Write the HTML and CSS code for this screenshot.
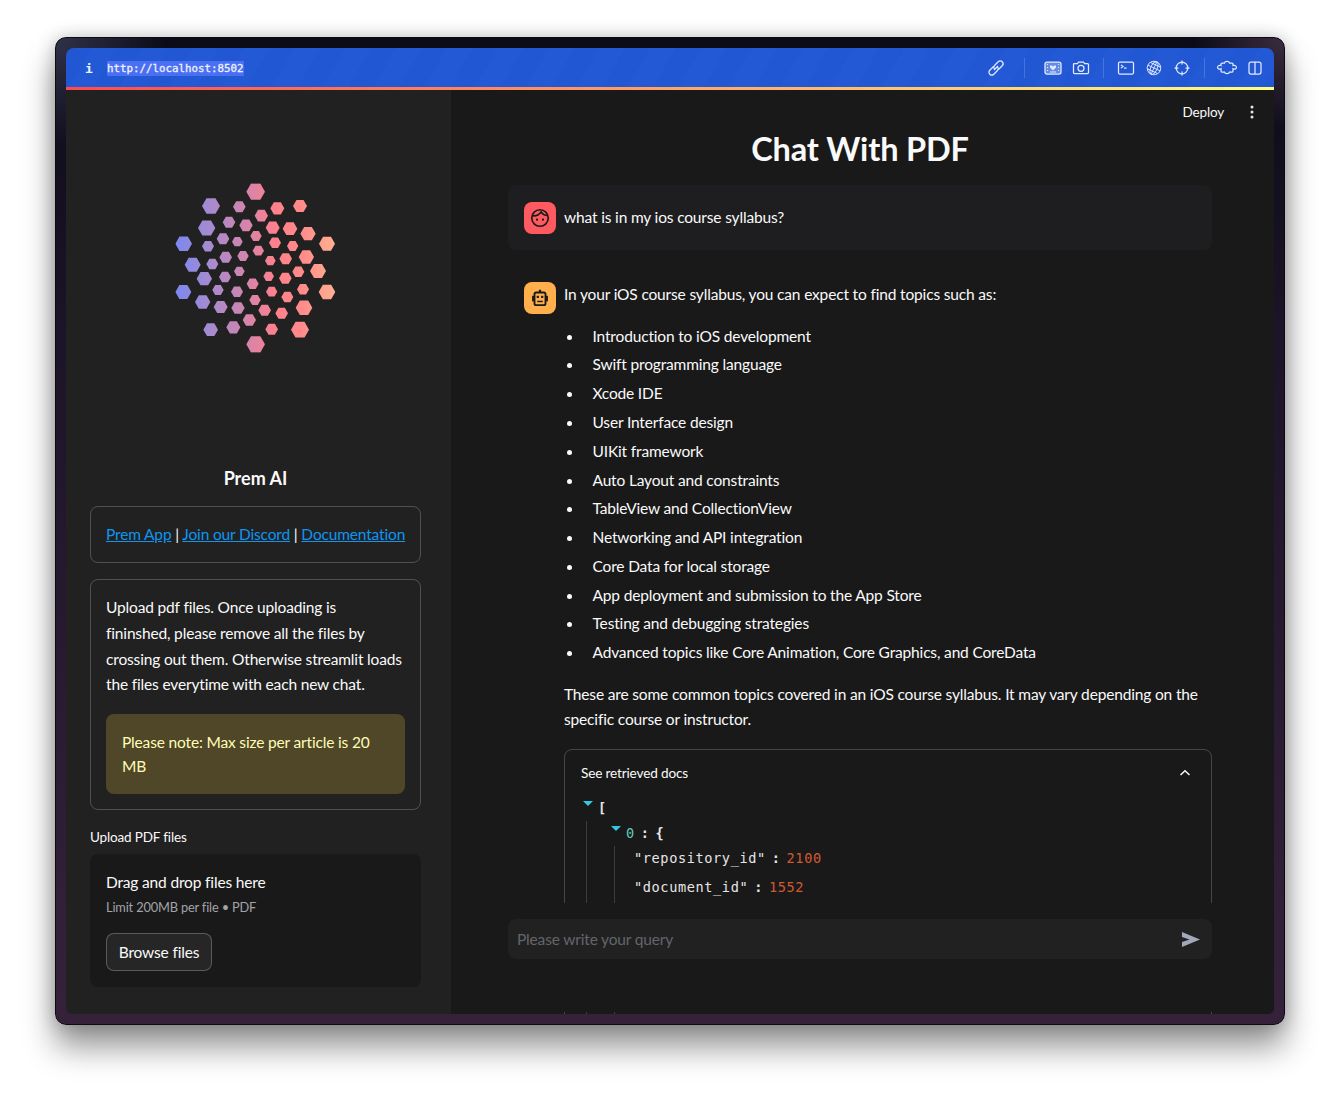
FILE: index.html
```html
<!DOCTYPE html>
<html lang="en">
<head>
    <meta charset="UTF-8">
    <meta name="viewport" content="width=device-width, initial-scale=1.0">
    <title>Chat With PDF</title>
    <link rel="stylesheet" href="styles.css">
</head>
<body>

    <div class="window">
        <div class="toolbar">
            <span class="info">i</span>
            <span class="url">http://localhost:8502</span>
            <div class="tools">
                <svg class="tool" viewBox="0 0 18 18"><path d="M7 11l4-4M6.500 7.500l-3.700 3.700a2.800 2.800 0 0 0 4 4l3.700-3.700a2.800 2.800 0 0 0 .3-3.300M11.500 10.500l3.700-3.700a2.800 2.800 0 0 0-4-4L7.500 6.500a2.800 2.800 0 0 0-.3 3.300"/></svg>
                <span class="sep wide"></span>
                <svg class="tool" viewBox="0 0 18 18"><rect class="tint" x="1" y="3" width="16" height="12" rx="2"/><path class="solid" d="M6 6.500h2l1 1.200 1-1.200h2v2l-3 3-3-3zM3 5h1v1H3zM3 8h1v1H3zM3 11h1v1H3zM14 5h1v1h-1zM14 8h1v1h-1zM14 11h1v1h-1zM6 12.500h6v1H6z"/></svg>
                <svg class="tool" viewBox="0 0 18 18"><path d="M1.500 5.500a1 1 0 0 1 1-1h3l1-1.500h5l1 1.500h3a1 1 0 0 1 1 1v8a1 1 0 0 1-1 1h-13a1 1 0 0 1-1-1z"/><circle cx="9" cy="9.300" r="3"/></svg>
                <span class="sep"></span>
                <svg class="tool" viewBox="0 0 18 18"><rect x="1.500" y="3" width="15" height="12" rx="1.200"/><path d="M4 6l2 1.500L4 9M7 9h2.500"/></svg>
                <svg class="tool" viewBox="0 0 18 18"><g class="thin" transform="rotate(25 9 9)"><circle cx="9" cy="9" r="6.800"/><ellipse cx="9" cy="9" rx="3.200" ry="6.800"/><path d="M9 2.200v13.600M2.200 9h13.600M3.200 5.500h11.600M3.200 12.500h11.600"/></g></svg>
                <svg class="tool" viewBox="0 0 18 18"><circle cx="9" cy="9" r="5.800"/><path d="M9 1.500v4M9 12.500v4M1.500 9h4M12.500 9h4"/></svg>
                <span class="sep"></span>
                <svg class="tool" viewBox="0 0 18 18"><path d="M4 4h2.500c.3-2.200 4.700-2.200 5 0H14c.6 0 1 .4 1 1v1.500c2.300-.8 3.800 1 3.400 2.300-.5 1.400-2 1.700-3.400.9V12c0 .6-.4 1-1 1h-2.500c-.3 2.200-4.700 2.200-5 0H4c-.6 0-1-.4-1-1V9.700C1.600 10.500.1 10.200-.4 8.800-.8 7.500.7 5.700 3 6.500V5c0-.6.400-1 1-1z"/></svg>
                <svg class="tool" viewBox="0 0 18 18"><rect x="3" y="3" width="12" height="12" rx="2"/><path d="M9 3v12"/></svg>
            </div>
        </div>
        <div class="stripe"></div>

        <div class="app">
            <aside class="sidebar">
                <svg class="logo" viewBox="0 0 570 585">
                    <defs>
                        <polygon id="h" points="-1,0 -.5,-.87 .5,-.87 1,0 .5,.87 -.5,.87"/>
                        <linearGradient id="logoGrad" gradientUnits="userSpaceOnUse" x1="40" y1="0" x2="530" y2="0">
                            <stop offset="0" stop-color="#7788f2"/>
                            <stop offset=".2" stop-color="#a18bd4"/>
                            <stop offset=".4" stop-color="#c886b4"/>
                            <stop offset=".52" stop-color="#e5839f"/>
                            <stop offset=".62" stop-color="#ff808c"/>
                            <stop offset=".78" stop-color="#ff8a8a"/>
                            <stop offset="1" stop-color="#ffb291"/>
                        </linearGradient>
                        <clipPath id="hexes">
                            <use href="#h" transform="translate(287 65) scale(28)"/>
                            <use href="#h" transform="translate(153 108) scale(27)"/>
                            <use href="#h" transform="translate(238 110) scale(19)"/>
                            <use href="#h" transform="translate(352 115) scale(21)"/>
                            <use href="#h" transform="translate(420 108) scale(21)"/>
                            <use href="#h" transform="translate(304 137) scale(20)"/>
                            <use href="#h" transform="translate(207 157) scale(19)"/>
                            <use href="#h" transform="translate(258 166) scale(20)"/>
                            <use href="#h" transform="translate(140 174) scale(26)"/>
                            <use href="#h" transform="translate(338 173) scale(21)"/>
                            <use href="#h" transform="translate(390 176) scale(22)"/>
                            <use href="#h" transform="translate(444 191) scale(23)"/>
                            <use href="#h" transform="translate(288 198) scale(17)"/>
                            <use href="#h" transform="translate(189 206) scale(19)"/>
                            <use href="#h" transform="translate(232 215) scale(16)"/>
                            <use href="#h" transform="translate(501 221) scale(24)"/>
                            <use href="#h" transform="translate(71 221) scale(25)"/>
                            <use href="#h" transform="translate(345 218) scale(18)"/>
                            <use href="#h" transform="translate(144 229) scale(18)"/>
                            <use href="#h" transform="translate(398 228) scale(17)"/>
                            <use href="#h" transform="translate(295 242) scale(17)"/>
                            <use href="#h" transform="translate(249 258) scale(17)"/>
                            <use href="#h" transform="translate(197 262) scale(19)"/>
                            <use href="#h" transform="translate(439 261) scale(23)"/>
                            <use href="#h" transform="translate(331 272) scale(16)"/>
                            <use href="#h" transform="translate(377 266) scale(19)"/>
                            <use href="#h" transform="translate(157 282) scale(18)"/>
                            <use href="#h" transform="translate(98 284) scale(24)"/>
                            <use href="#h" transform="translate(474 303) scale(24)"/>
                            <use href="#h" transform="translate(415 305) scale(18)"/>
                            <use href="#h" transform="translate(238 304) scale(16)"/>
                            <use href="#h" transform="translate(326 319) scale(16)"/>
                            <use href="#h" transform="translate(133 326) scale(23)"/>
                            <use href="#h" transform="translate(195 321) scale(18)"/>
                            <use href="#h" transform="translate(376 325) scale(19)"/>
                            <use href="#h" transform="translate(278 341) scale(18)"/>
                            <use href="#h" transform="translate(70 366) scale(24)"/>
                            <use href="#h" transform="translate(174 360) scale(17)"/>
                            <use href="#h" transform="translate(231 365) scale(18)"/>
                            <use href="#h" transform="translate(335 365) scale(17)"/>
                            <use href="#h" transform="translate(429 358) scale(18)"/>
                            <use href="#h" transform="translate(501 366) scale(25)"/>
                            <use href="#h" transform="translate(382 381) scale(18)"/>
                            <use href="#h" transform="translate(128 396) scale(23)"/>
                            <use href="#h" transform="translate(285 390) scale(17)"/>
                            <use href="#h" transform="translate(182 411) scale(21)"/>
                            <use href="#h" transform="translate(234 414) scale(20)"/>
                            <use href="#h" transform="translate(432 413) scale(25)"/>
                            <use href="#h" transform="translate(314 421) scale(19)"/>
                            <use href="#h" transform="translate(365 430) scale(19)"/>
                            <use href="#h" transform="translate(268 450) scale(20)"/>
                            <use href="#h" transform="translate(152 479) scale(22)"/>
                            <use href="#h" transform="translate(220 472) scale(21)"/>
                            <use href="#h" transform="translate(335 478) scale(19)"/>
                            <use href="#h" transform="translate(420 479) scale(27)"/>
                            <use href="#h" transform="translate(287 523) scale(28)"/>
                        </clipPath>
                    </defs>
                    <rect width="570" height="585" fill="url(#logoGrad)" clip-path="url(#hexes)"/>
                </svg>

                <h2 class="brand">Prem AI</h2>

                <div class="card links">
                    <a href="#">Prem App</a> | <a href="#">Join our Discord</a> | <a href="#">Documentation</a>
                </div>

                <div class="card">
                    <p class="intro">Upload pdf files. Once uploading is fininshed, please remove all the files by crossing out them. Otherwise streamlit loads the files everytime with each new chat.</p>
                    <div class="note">Please note: Max size per article is 20 MB</div>
                </div>

                <label class="upload-label">Upload PDF files</label>
                <div class="dropzone">
                    <div class="drop-title">Drag and drop files here</div>
                    <div class="drop-limit">Limit 200MB per file • PDF</div>
                    <button class="browse">Browse files</button>
                </div>
            </aside>

            <main class="main">
                <div class="top-actions">
                    <span class="deploy">Deploy</span>
                    <svg class="kebab" viewBox="0 0 4 14"><circle cx="2" cy="2" r="1.500"/><circle cx="2" cy="7" r="1.500"/><circle cx="2" cy="12" r="1.500"/></svg>
                </div>

                <div class="content">
                    <h1>Chat With PDF</h1>

                    <div class="message user">
                        <div class="avatar red">
                            <svg viewBox="0 0 20 20"><circle cx="10" cy="10" r="7.500"/><path d="M3.500 8C6 8.300 9 7.200 11 4.500c1 2 3 3 5.300 3.200"/><circle class="dot" cx="7.300" cy="11.500" r="1"/><circle class="dot" cx="12.700" cy="11.500" r="1"/></svg>
                        </div>
                        <div class="message-body">what is in my ios course syllabus?</div>
                    </div>

                    <div class="message bot">
                        <div class="avatar orange">
                            <svg viewBox="0 0 20 20"><rect class="fill" x="9" y="2.500" width="2" height="3"/><rect class="fill" x="2.800" y="8" width="2.500" height="5"/><rect class="fill" x="14.700" y="8" width="2.500" height="5"/><rect class="face" x="5" y="5" width="10" height="11.500" rx="1.500"/><rect class="fill" x="7" y="8" width="2" height="2"/><rect class="fill" x="11" y="8" width="2" height="2"/><rect class="fill" x="7.500" y="12.500" width="5" height="1.300"/></svg>
                        </div>
                        <div class="message-body">
                            <p>In your iOS course syllabus, you can expect to find topics such as:</p>
                            <ul>
                                <li>Introduction to iOS development</li>
                                <li>Swift programming language</li>
                                <li>Xcode IDE</li>
                                <li>User Interface design</li>
                                <li>UIKit framework</li>
                                <li>Auto Layout and constraints</li>
                                <li>TableView and CollectionView</li>
                                <li>Networking and API integration</li>
                                <li>Core Data for local storage</li>
                                <li>App deployment and submission to the App Store</li>
                                <li>Testing and debugging strategies</li>
                                <li>Advanced topics like Core Animation, Core Graphics, and CoreData</li>
                            </ul>
                            <p class="summary">These are some common topics covered in an iOS course syllabus. It may vary depending on the specific course or instructor.</p>

                            <div class="expander">
                                <div class="expander-head">
                                    <span>See retrieved docs</span>
                                    <svg class="chevron" viewBox="0 0 12 8"><path d="M1.500 6L6 1.800 10.500 6"/></svg>
                                </div>
                                <div class="json">
                                    <div class="json-row"><i class="caret"></i><span class="bracket">[</span></div>
                                    <div class="json-nest">
                                        <div class="json-row"><i class="caret"></i><span class="idx">0</span><span class="colon">:</span><span class="bracket">{</span></div>
                                        <div class="json-nest inner">
                                            <div class="json-row"><span class="key">"repository_id"</span><span class="colon">:</span><span class="num">2100</span></div>
                                            <div class="json-row"><span class="key">"document_id"</span><span class="colon">:</span><span class="num">1552</span></div>
                                        </div>
                                    </div>
                                </div>
                            </div>
                        </div>
                    </div>
                </div>

                <div class="bottom">
                    <div class="chat-input">
                        <span class="placeholder">Please write your query</span>
                        <svg class="send" viewBox="0 0 18 15"><path d="M0 0l18 7.500L0 15v-5l7.500-2.500L0 5z"/></svg>
                    </div>
                </div>
            </main>
        </div>
    </div>

</body>
</html>
```

FILE: styles.css
```css
* {
    box-sizing: border-box;
}

html, body {
    height: 1099px;
    overflow: hidden;
}

body {
    margin: 0;
    padding: 37px 55px 0;
    background: #fff;
    font-family: 'Lato', sans-serif;
    font-size: 15.5px;
    letter-spacing: -0.16px;
    color: #fafafa;
}

.window {
    height: 988px;
    padding: 10px;
    border: 1px solid #0c0c10;
    border-radius: 11px;
    background:
        radial-gradient(circle at 0 0, #30324a 0, rgba(48, 50, 74, 0) 110px),
        radial-gradient(circle at 100% 0, #3a2c40 0, rgba(58, 44, 64, 0) 90px),
        linear-gradient(180deg, #0b0b18 0, #1c1428 30%, #35223a 100%);
    box-shadow: 0 22px 32px rgba(0, 0, 0, 0.42), 0 0 18px rgba(0, 0, 0, 0.22);
    display: flex;
    flex-direction: column;
}

/* browser bar */
.toolbar {
    height: 39px;
    flex: none;
    display: flex;
    align-items: center;
    padding: 1px 10px 0 19px;
    border-radius: 8px 8px 0 0;
    background: repeating-linear-gradient(120deg, #2257d4 0 22px, #2459d6 22px 44px);
    font-family: 'DejaVu Sans Mono', monospace;
    font-size: 10.8px;
    letter-spacing: 0;
    color: #eef2ff;
}

.info {
    font-size: 13px;
    font-weight: bold;
    width: 22px;
}

.url {
    background: #4a6ff2;
    padding: 1px 0;
    line-height: 13px;
    -webkit-text-stroke: 0.3px #eef2ff;
}

.tools {
    margin-left: auto;
    display: flex;
    align-items: center;
    gap: 10px;
}

.tool {
    width: 18px;
    height: 18px;
    fill: none;
    stroke: #e3eaff;
    stroke-width: 1.25;
    overflow: visible;
}

.tool .solid {
    fill: #e3eaff;
    stroke: none;
}

.tool .tint {
    fill: rgba(255, 255, 255, 0.3);
}

.tool .thin {
    stroke-width: 0.9;
}

.sep {
    width: 1px;
    height: 20px;
    margin: 0 3px;
    background: rgba(255, 255, 255, 0.16);
}

.sep.wide {
    margin: 0 9px;
}

.stripe {
    height: 3px;
    flex: none;
    background: linear-gradient(90deg, #ff4b4b, #fffd80);
}

.app {
    flex: 1;
    min-height: 0;
    display: flex;
    border-radius: 0 0 6px 6px;
    overflow: hidden;
}

/* sidebar */
.sidebar {
    width: 385px;
    flex: none;
    padding: 80px 30px 0 24px;
    background: #212121;
}

.logo {
    display: block;
    width: 190px;
    height: 195px;
    margin: 0 auto 0 70px;
}

.brand {
    margin: 100px 0 15px;
    text-align: center;
    font-size: 18px;
    line-height: 26px;
    font-weight: 700;
    letter-spacing: 0;
}

.card {
    border: 1px solid rgba(250, 250, 250, 0.22);
    border-radius: 8px;
    padding: 15px;
    margin-bottom: 16px;
}

.links {
    height: 57px;
    line-height: 25.6px;
    white-space: nowrap;
}

.links a {
    color: #0d96f0;
}

.intro {
    margin: 0 0 16px;
    max-width: 296px;
    line-height: 25.8px;
}

.note {
    padding: 16px;
    border-radius: 8px;
    background: #4f4727;
    color: #fffcb8;
    line-height: 24px;
}

.upload-label {
    display: block;
    font-size: 13.5px;
    line-height: 20px;
    margin: 17px 0 7px;
}

.dropzone {
    height: 133px;
    padding: 16px;
    border-radius: 8px;
    background: #191919;
}

.drop-title {
    line-height: 24px;
}

.drop-limit {
    font-size: 12.8px;
    line-height: 20px;
    margin-top: 3px;
    color: #a3a3a8;
}

.browse {
    display: block;
    margin-top: 16px;
    width: 106px;
    height: 38px;
    border: 1px solid rgba(250, 250, 250, 0.25);
    border-radius: 8px;
    background: #262626;
    color: #fafafa;
    font-family: inherit;
    font-size: 15.5px;
    letter-spacing: inherit;
    padding: 0;
}

/* main area */
.main {
    flex: 1;
    min-width: 0;
    position: relative;
    overflow: hidden;
    background: #191919;
}

.top-actions {
    height: 44px;
    display: flex;
    justify-content: flex-end;
    align-items: center;
    gap: 26px;
    padding-right: 20px;
    font-size: 13.5px;
}

.kebab {
    width: 4px;
    height: 14px;
    fill: #e6e6e6;
}

.content {
    padding: 0 62px 0 57px;
}

h1 {
    margin: 0 0 21px;
    text-align: center;
    font-size: 32.5px;
    line-height: 30px;
    font-weight: 700;
}

.message {
    display: flex;
    gap: 8px;
    padding: 16px 0 16px 16px;
    border-radius: 8px;
    line-height: 25.6px;
}

.message.user {
    background: #1e1e20;
    margin-bottom: 16px;
    height: 65px;
    align-items: center;
}

.avatar {
    width: 32px;
    height: 32px;
    flex: none;
    border-radius: 8px;
    display: flex;
    align-items: center;
    justify-content: center;
}

.avatar svg {
    width: 22px;
    height: 22px;
    fill: none;
    stroke: #191919;
    stroke-width: 1.5;
}

.avatar .dot,
.avatar .fill {
    fill: #191919;
    stroke: none;
}

.avatar .face {
    fill: #ffaf4b;
    stroke-width: 1.7;
}

.red {
    background: #ff5a5f;
}

.orange {
    background: #ffaf4b;
}

.message-body {
    flex: 1;
    min-width: 0;
}

.message-body p {
    margin: 0 0 16px;
}

.message-body ul {
    margin: 0 0 16px;
    padding: 0 0 0 28.5px;
    list-style: none;
}

.message-body li {
    position: relative;
    margin-bottom: 3.2px;
}

.message-body li::before {
    content: "";
    position: absolute;
    left: -26px;
    top: 11px;
    width: 5px;
    height: 5px;
    border-radius: 50%;
    background: #fafafa;
}

.expander {
    border: 1px solid rgba(250, 250, 250, 0.2);
    border-radius: 8px;
    padding: 0 16px;
    height: 400px;
}

.expander-head {
    display: flex;
    justify-content: space-between;
    align-items: center;
    height: 47px;
    font-size: 13.6px;
    padding-right: 4px;
}

.chevron {
    width: 12px;
    height: 8px;
    fill: none;
    stroke: #fafafa;
    stroke-width: 1.5;
}

/* json viewer */
.json {
    font-family: 'DejaVu Sans Mono', monospace;
    font-size: 13.6px;
    letter-spacing: 0.6px;
    line-height: 17px;
    padding-left: 2px;
    margin-top: -1px;
}

.json-row {
    position: relative;
    display: flex;
    gap: 6px;
    height: 25px;
    align-items: center;
    padding-left: 15px;
}

.json-nest {
    margin-left: 3px;
    padding-left: 24px;
    height: 320px;
    border-left: 1px solid #3c3c3c;
}

.json-nest.inner {
    padding-left: 15px;
}

.inner .json-row {
    height: 29px;
    padding-left: 4px;
    top: -2px;
}

.caret {
    position: absolute;
    left: 0;
    top: 5px;
    width: 0;
    height: 0;
    border-left: 5px solid transparent;
    border-right: 5px solid transparent;
    border-top: 5px solid #2ecbe0;
}

.bracket,
.colon {
    color: #e6e6e6;
    font-weight: bold;
}

.key {
    color: #e6e6e6;
}

.idx {
    color: #5fc9b8;
}

.num {
    color: #cf5a31;
}

/* chat input, sits over the scrolled messages */
.bottom {
    position: absolute;
    left: 0;
    right: 0;
    top: 813px;
    height: 109px;
    padding: 16px 62px 0 57px;
    background: #191919;
}

.chat-input {
    height: 40px;
    display: flex;
    align-items: center;
    justify-content: space-between;
    padding: 0 12px 0 9px;
    border-radius: 8px;
    background: #212121;
}

.placeholder {
    color: #64656c;
}

.send {
    width: 18px;
    height: 15px;
    fill: #a3a8b8;
}
```
